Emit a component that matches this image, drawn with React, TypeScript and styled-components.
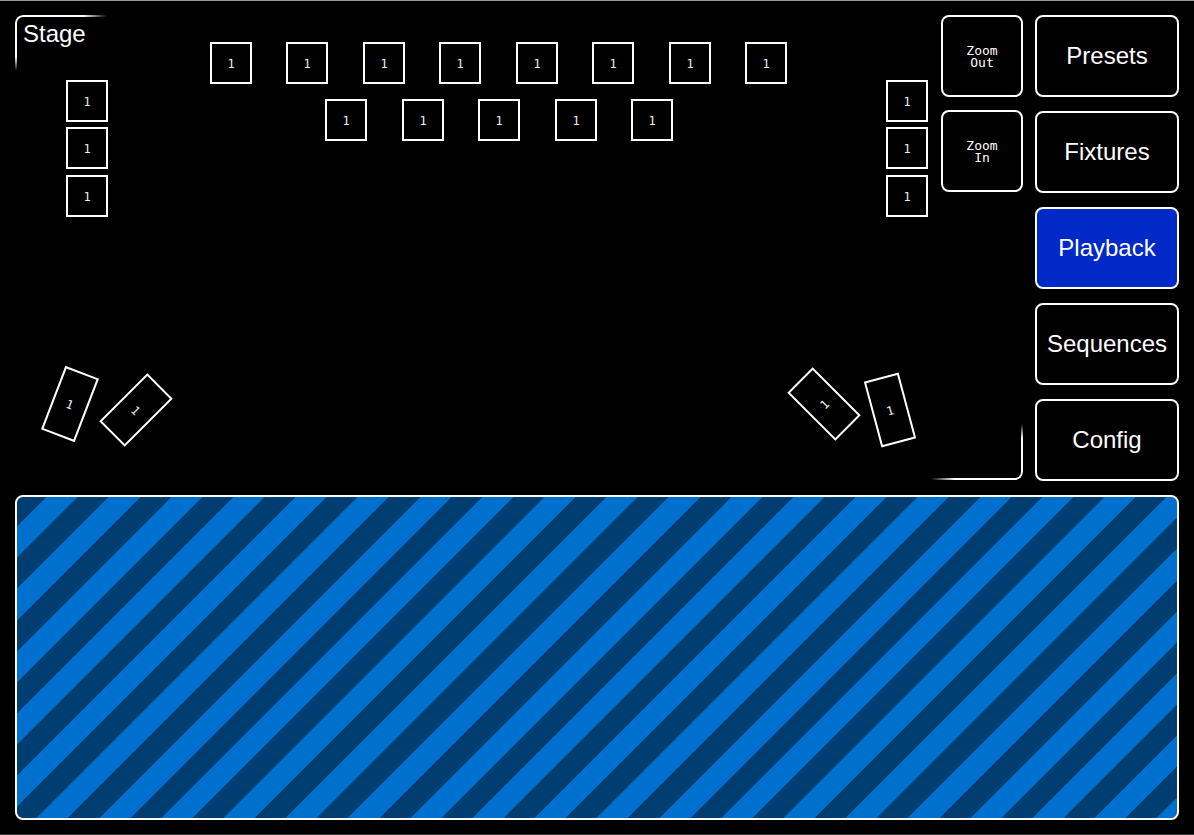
import React, { useState } from "react";
import styled, { createGlobalStyle } from "styled-components";

const GlobalStyle = createGlobalStyle`
  *, *::before, *::after { box-sizing: border-box; }
  body {
    margin: 0;
    background: #000;
    color: #fff;
    font-family: "Liberation Sans", Arial, sans-serif;
  }
`;

const Page = styled.div`
  display: flex;
  flex-direction: column;
  gap: 14px;
  min-height: 100vh;
  padding: 14px 15px;
  border-top: 1px solid #979797;
  border-bottom: 1px solid #333;
`;

const TopArea = styled.div`
  display: flex;
  gap: 12px;
`;

const StageWindow = styled.section`
  position: relative;
  display: flex;
  flex: 1;
  min-width: 0;
  margin-bottom: 1px;

  &::before,
  &::after {
    content: "";
    position: absolute;
    width: 110px;
    height: 64px;
    pointer-events: none;
  }
  &::before {
    top: 0;
    left: 0;
    border-top: 2px solid #fff;
    border-left: 2px solid #fff;
    border-top-left-radius: 8px;
    mask-image: radial-gradient(92px 56px at 0 0, #000 74%, transparent);
  }
  &::after {
    right: 0;
    bottom: 0;
    border-right: 2px solid #fff;
    border-bottom: 2px solid #fff;
    border-bottom-right-radius: 8px;
    mask-image: radial-gradient(92px 56px at 100% 100%, #000 74%, transparent);
  }
`;

const StageCanvas = styled.div`
  position: relative;
  flex: 1;
  min-width: 0;
`;

const Title = styled.h1`
  margin: 0;
  padding: 5px 8px;
  font-size: 24px;
  font-weight: 400;
  line-height: 28px;
`;

const FixtureBox = styled.div<{ $x: number; $y: number; $tall?: boolean; $angle?: number }>`
  position: absolute;
  left: ${(p) => p.$x}px;
  top: ${(p) => p.$y}px;
  display: flex;
  align-items: center;
  justify-content: center;
  width: ${(p) => (p.$tall ? 36 : 42)}px;
  height: ${(p) => (p.$tall ? 68 : 42)}px;
  padding-top: 2px;
  border: 2px solid #fff;
  transform: ${(p) => (p.$angle ? `rotate(${p.$angle}deg)` : "none")};
  color: #eee;
  font-family: "DejaVu Sans Mono", monospace;
  font-size: 12px;
  line-height: 12px;
`;

const ZoomControls = styled.div`
  display: flex;
  flex-direction: column;
  gap: 13px;
`;

const Button = styled.button`
  height: 82px;
  padding: 0;
  border: 2px solid #fff;
  border-radius: 8px;
  background: #000;
  color: #fff;
  cursor: pointer;
`;

const ZoomButton = styled(Button)`
  width: 82px;
  padding: 2px 20px 0;
  font-family: "DejaVu Sans Mono", monospace;
  font-size: 13px;
  line-height: 12px;
`;

const Nav = styled.nav`
  display: flex;
  flex-direction: column;
  gap: 14px;
  width: 144px;
`;

const NavButton = styled(Button)<{ $active: boolean }>`
  background: ${(p) => (p.$active ? "#0029c8" : "#000")};
  font-family: inherit;
  font-size: 24px;
  line-height: 28px;
`;

const PlaybackPanel = styled.section`
  flex: 1;
  min-height: 160px;
  border: 2px solid #fff;
  border-radius: 8px;
  background: repeating-linear-gradient(
    135deg,
    #003d70 0 21px,
    #0070cf 21px 43px,
    #003d70 43px 44px
  ) padding-box;
`;

type Fixture = { x: number; y: number; tall?: boolean; angle?: number };

const fixtures: Fixture[] = [
  ...[195, 271, 348, 424, 501, 577, 654, 730].map((x) => ({ x, y: 27 })),
  ...[310, 387, 463, 540, 616].map((x) => ({ x, y: 84 })),
  ...[51, 871].flatMap((x) => [65, 112, 160].map((y) => ({ x, y }))),
  { x: 37, y: 355, tall: true, angle: 21 },
  { x: 103, y: 361, tall: true, angle: 45 },
  { x: 791, y: 355, tall: true, angle: -45 },
  { x: 857, y: 361, tall: true, angle: -15 },
];

const windows = ["Presets", "Fixtures", "Playback", "Sequences", "Config"];

export default function App() {
  const [active, setActive] = useState("Playback");

  return (
    <>
      <GlobalStyle />
      <Page>
        <TopArea>
          <StageWindow>
            <StageCanvas>
              <Title>Stage</Title>
              {fixtures.map((f, i) => (
                <FixtureBox key={i} $x={f.x} $y={f.y} $tall={f.tall} $angle={f.angle}>
                  1
                </FixtureBox>
              ))}
            </StageCanvas>
            <ZoomControls>
              <ZoomButton type="button">Zoom Out</ZoomButton>
              <ZoomButton type="button">Zoom In</ZoomButton>
            </ZoomControls>
          </StageWindow>
          <Nav>
            {windows.map((name) => (
              <NavButton
                key={name}
                type="button"
                $active={name === active}
                aria-pressed={name === active}
                onClick={() => setActive(name)}
              >
                {name}
              </NavButton>
            ))}
          </Nav>
        </TopArea>
        <PlaybackPanel aria-label={active} />
      </Page>
    </>
  );
}
